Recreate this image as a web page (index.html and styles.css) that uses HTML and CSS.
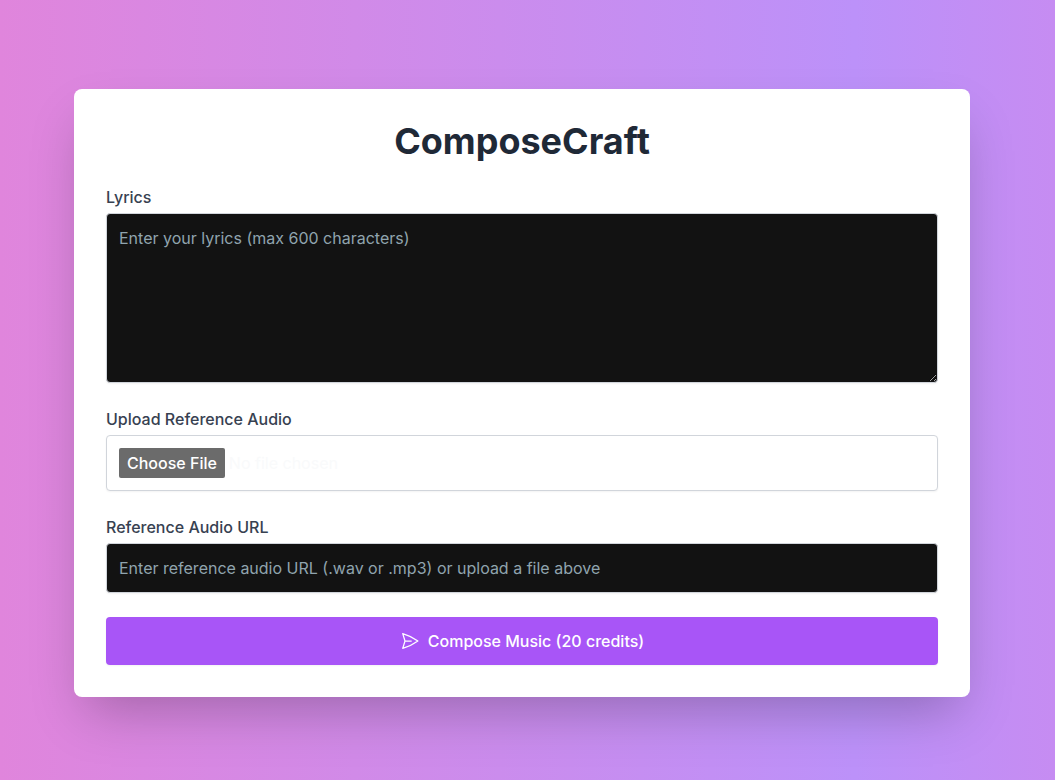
FILE: index.html
```html
<!DOCTYPE html>
<html lang="en">
<head>
    <meta charset="UTF-8">
    <meta name="viewport" content="width=device-width, initial-scale=1.0">
    <title>ComposeCraft</title>
    <link rel="stylesheet" href="styles.css">
</head>
<body>
    <main class="page">
        <div class="card">
            <h1 class="title">ComposeCraft</h1>
            <form class="form">
                <div class="field">
                    <label class="label" for="lyrics">Lyrics</label>
                    <textarea class="input lyrics" id="lyrics" rows="6" maxlength="600" placeholder="Enter your lyrics (max 600 characters)"></textarea>
                </div>
                <div class="field">
                    <label class="label" for="audio-file">Upload Reference Audio</label>
                    <input class="input file-input" type="file" id="audio-file" accept="audio/*">
                </div>
                <div class="field">
                    <label class="label" for="audio-url">Reference Audio URL</label>
                    <input class="input" type="text" id="audio-url" placeholder="Enter reference audio URL (.wav or .mp3) or upload a file above">
                </div>
                <button class="submit" type="button">
                    <svg class="submit-icon" viewBox="0 0 24 24" fill="none" stroke="currentColor" stroke-width="1.5" stroke-linecap="round" stroke-linejoin="round" aria-hidden="true">
                        <path d="M6 12L3.269 3.126A59.768 59.768 0 0121.485 12 59.77 59.77 0 013.27 20.876L5.999 12zm0 0h7.5"/>
                    </svg>
                    Compose Music (20 credits)
                </button>
            </form>
        </div>
    </main>
</body>
</html>
```

FILE: styles.css
```css
* {
    box-sizing: border-box;
}
body {
    margin: 0;
    font-family: Inter, "Liberation Sans", sans-serif;
    font-size: 16px;
    line-height: 24px;
}
.page {
    display: flex;
    justify-content: center;
    align-items: center;
    min-height: 100vh;
    padding: 54px 27px 48px 16px;
    background: linear-gradient(90deg, #e085dc 0%, #bc91f9 81%, #c68cf2 100%);
}
.card {
    width: 100%;
    max-width: 896px;
    padding: 32px;
    background-color: #ffffff;
    border-radius: 8px;
    box-shadow: 0 25px 50px -12px rgba(0, 0, 0, 0.25);
}
.title {
    margin: 0 0 24px;
    font-size: 36px;
    line-height: 40px;
    font-weight: 700;
    text-align: center;
    color: #1f2937;
}
.form {
    display: flex;
    flex-direction: column;
    gap: 24px;
}
.field {
    display: flex;
    flex-direction: column;
    gap: 4px;
}
.label {
    font-weight: 500;
    color: #374151;
}
.input {
    display: block;
    width: 100%;
    margin: 0;
    padding: 12px;
    font: inherit;
    color: #f9fafb;
    background-color: #121212;
    border: 1px solid #d1d5db;
    border-radius: 4px;
    box-shadow: 0 1px 2px rgba(0, 0, 0, 0.05);
}
.input::placeholder {
    color: #90a4ae;
}
.lyrics {
    resize: vertical;
}
.file-input {
    background-color: #ffffff;
}
.file-input::file-selector-button {
    padding: 3px 8px;
    font: inherit;
    font-weight: 500;
    color: #ffffff;
    background-color: #6b6b6b;
    border: none;
    border-radius: 2px;
}
.submit {
    display: flex;
    justify-content: center;
    align-items: center;
    gap: 8px;
    padding: 12px 16px;
    font: inherit;
    font-weight: 500;
    color: #ffffff;
    background-color: #a855f7;
    border: none;
    border-radius: 4px;
    box-shadow: 0 1px 2px rgba(0, 0, 0, 0.05);
    cursor: pointer;
}
.submit:hover {
    background-color: #9333ea;
}
.submit-icon {
    width: 20px;
    height: 20px;
}
```
